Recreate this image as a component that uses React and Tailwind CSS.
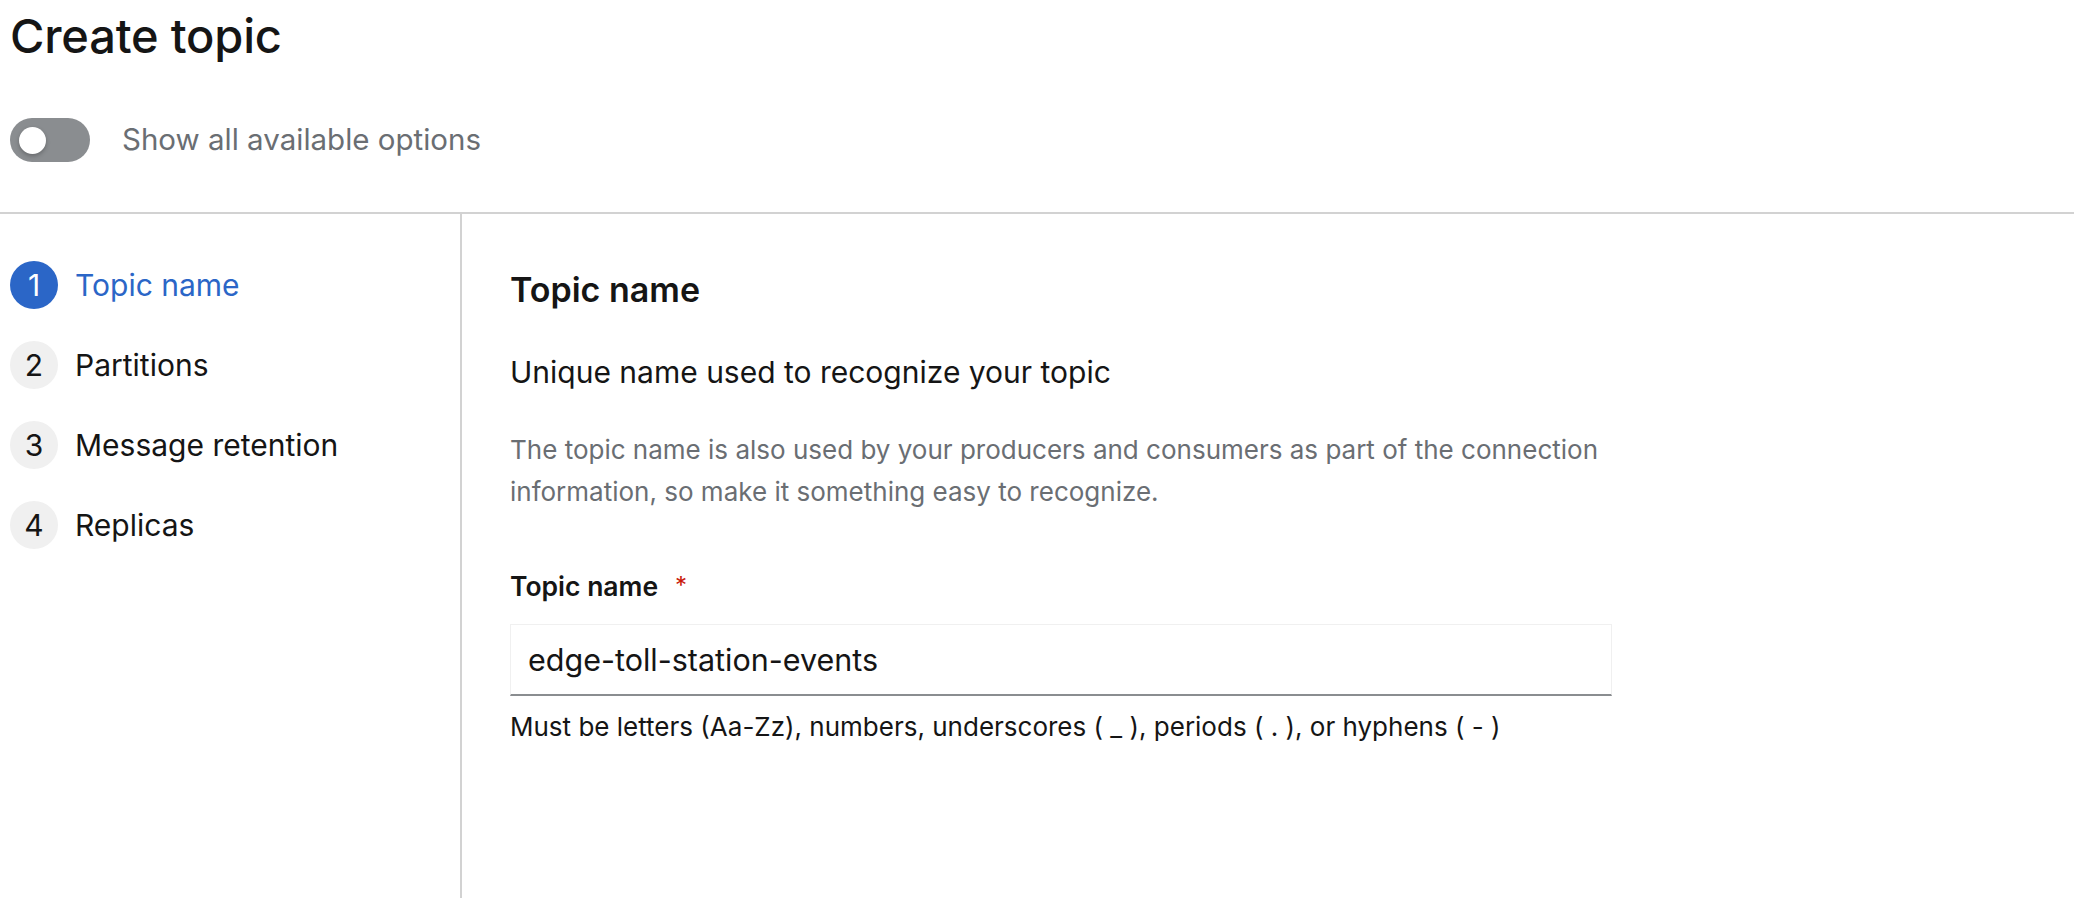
import React from "react";

const steps = [
  { n: 1, label: "Topic name", active: true },
  { n: 2, label: "Partitions" },
  { n: 3, label: "Message retention" },
  { n: 4, label: "Replicas" },
];

export default function App() {
  return (
    <div
      className="flex h-screen w-full flex-col bg-white text-[#151515]"
      style={{ fontFamily: "Inter, 'Noto Sans', sans-serif" }}
    >
      <div className="px-[10px] pt-[13px]">
        <h1 className="text-[47px] leading-[45px] font-medium tracking-[-0.2px]">Create topic</h1>
        <div className="mt-[60px] flex h-[44px] items-center">
          <div className="relative h-[44px] w-[80px] rounded-full bg-[#8a8d90]">
            <div className="absolute left-[9px] top-[8.5px] h-[27px] w-[27px] rounded-full bg-white shadow-[0_2px_4px_rgba(0,0,0,0.25)]" />
          </div>
          <span className="ml-[32px] pb-[3px] text-[29.5px] leading-[44px] text-[#6a6e73]">
            Show all available options
          </span>
        </div>
      </div>
      <div className="mt-[50px] h-[2px] w-full bg-[#d2d2d2]" />
      <div className="flex flex-1">
        <nav className="w-[462px] shrink-0 border-r-2 border-[#d2d2d2] pl-[10px] pt-[47px]">
          <ul className="flex flex-col gap-[32px]">
            {steps.map((s) => (
              <li key={s.n} className="flex h-[48px] items-center">
                <span
                  className={
                    s.active
                      ? "flex h-[48px] w-[48px] items-center justify-center rounded-full bg-[#2b66c7] text-[30px] text-white"
                      : "flex h-[48px] w-[48px] items-center justify-center rounded-full bg-[#f0f0f0] text-[30px] text-[#151515]"
                  }
                >
                  {s.n}
                </span>
                <span
                  className={
                    s.active
                      ? "ml-[17px] text-[30px] leading-[48px] text-[#2b66c7]"
                      : "ml-[17px] text-[30px] leading-[48px] text-[#151515]"
                  }
                >
                  {s.label}
                </span>
              </li>
            ))}
          </ul>
        </nav>
        <main className="flex-1 pl-[48px] pt-[59px]">
          <h2 className="text-[34px] leading-[34px] font-semibold">Topic name</h2>
          <p className="mt-[50px] text-[30px] leading-[30px]">
            Unique name used to recognize your topic
          </p>
          <p className="mt-[42px] text-[26px] leading-[42px] text-[#6a6e73]">
            The topic name is also used by your producers and consumers as part of the connection
            <br />
            information, so make it something easy to recognize.
          </p>
          <div className="mt-[60px] flex items-start">
            <span className="text-[26.5px] leading-[26px] font-semibold">Topic name</span>
            <span className="ml-[17px] text-[24px] leading-[26px] text-[#c9190b]">*</span>
          </div>
          <div className="mt-[25px] flex h-[72px] w-[1102px] items-center border border-b-2 border-[#f0f0f0] border-b-[#8a8d90] pl-[17px]">
            <span className="text-[30.5px]">edge-toll-station-events</span>
          </div>
          <p className="mt-[18px] text-[26px] leading-[26px]">
            Must be letters (Aa-Zz), numbers, underscores ( _ ), periods ( . ), or hyphens ( - )
          </p>
        </main>
      </div>
    </div>
  );
}
